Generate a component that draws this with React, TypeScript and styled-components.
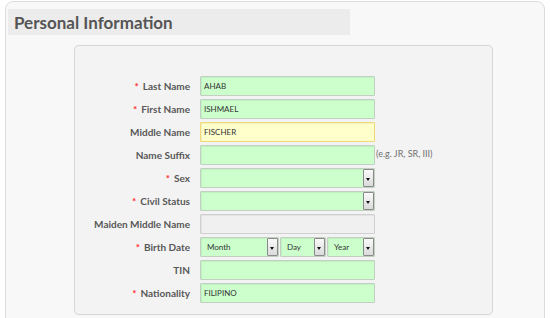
import React from "react";
import styled, { createGlobalStyle } from "styled-components";

const GlobalStyle = createGlobalStyle`
  html, body { margin: 0; padding: 0; background: #ffffff; }
  body { font-family: Lato, "Open Sans", sans-serif; overflow: hidden; height: 318px; }
  * { box-sizing: border-box; }
`;

const Card = styled.div`
  margin: 1px 0 0 5px;
  width: 540px;
  height: 330px;
  border: 1px solid #dcdcdc;
  border-radius: 8px;
  background: #f8f8f8;
  padding: 7px 0 0 2px;
`;

const Header = styled.div`
  width: 342px;
  height: 26px;
  background: #ececec;
  color: #555555;
  font-family: Lato, sans-serif;
  font-weight: 700;
  font-size: 17px;
  line-height: 27px;
  padding-left: 6px;
`;

const Panel = styled.div`
  margin: 10px 0 0 66px;
  width: 419px;
  border: 1px solid #d8d8d8;
  border-radius: 5px;
  background: #f3f3f3;
  padding: 30px 0 11px 0;
  box-shadow: 0 0 1px rgba(0,0,0,0.05);
`;

const Form = styled.div`
  display: grid;
  grid-template-columns: 115px 175px auto;
  column-gap: 10px;
  row-gap: 3px;
  align-items: center;
`;

const Label = styled.div`
  text-align: right;
  font-size: 10px;
  font-weight: 700;
  color: #585858;
  line-height: 20px;
  white-space: nowrap;
`;

const Star = styled.span`
  color: #ff2a2a;
  margin-right: 4px;
`;

type Tone = "green" | "yellow" | "gray";

const toneBg: Record<Tone, string> = { green: "#ccffcc", yellow: "#ffffcc", gray: "#f0f0f0" };
const toneBorder: Record<Tone, string> = { green: "#c2cfc2", yellow: "#f2d878", gray: "#d0d0d0" };

const Field = styled.div<{ $tone?: Tone }>`
  height: 20px;
  border: 1px solid ${(p) => toneBorder[p.$tone ?? "green"]};
  border-radius: 1px;
  background: ${(p) => toneBg[p.$tone ?? "green"]};
  box-shadow: inset 1px 1px 1px rgba(0,0,0,0.06);
  font-size: 8px;
  color: #333;
  line-height: 18px;
  padding-left: 3px;
  position: relative;
  white-space: nowrap;
`;

const SelectBox = styled(Field)<{ $w?: number }>`
  padding-left: 6px;
  ${(p) => (p.$w ? `width: ${p.$w}px;` : "")}
`;

const Arrow = styled.span`
  position: absolute;
  right: 0;
  top: 0;
  width: 11px;
  height: 18px;
  border: 1px solid #8a8a8a;
  border-radius: 1px;
  background: linear-gradient(#fafafa, #dadada);
  &::after {
    content: "";
    position: absolute;
    left: 2px;
    top: 8px;
    border-left: 2.5px solid transparent;
    border-right: 2.5px solid transparent;
    border-top: 3px solid #111;
  }
`;

const DateRow = styled.div`
  display: flex;
  gap: 1px;
`;

const Hint = styled.div`
  margin-left: -9px;
  margin-top: -4px;
  font-size: 9px;
  color: #707070;
  white-space: nowrap;
`;

const Empty = styled.div``;

function Select({ text, w }: { text?: string; w?: number }) {
  return (
    <SelectBox $w={w}>
      {text}
      <Arrow />
    </SelectBox>
  );
}

export default function App() {
  return (
    <>
      <GlobalStyle />
      <Card>
        <Header>Personal Information</Header>
        <Panel>
          <Form>
            <Label><Star>*</Star>Last Name</Label>
            <Field>AHAB</Field>
            <Empty />

            <Label><Star>*</Star>First Name</Label>
            <Field>ISHMAEL</Field>
            <Empty />

            <Label>Middle Name</Label>
            <Field $tone="yellow">FISCHER</Field>
            <Empty />

            <Label>Name Suffix</Label>
            <Field />
            <Hint>(e.g. JR, SR, III)</Hint>

            <Label><Star>*</Star>Sex</Label>
            <Select />
            <Empty />

            <Label><Star>*</Star>Civil Status</Label>
            <Select />
            <Empty />

            <Label>Maiden Middle Name</Label>
            <Field $tone="gray" />
            <Empty />

            <Label><Star>*</Star>Birth Date</Label>
            <DateRow>
              <Select text="Month" w={79} />
              <Select text="Day" w={46} />
              <Select text="Year" w={48} />
            </DateRow>
            <Empty />

            <Label>TIN</Label>
            <Field />
            <Empty />

            <Label><Star>*</Star>Nationality</Label>
            <Field>FILIPINO</Field>
            <Empty />
          </Form>
        </Panel>
      </Card>
    </>
  );
}
